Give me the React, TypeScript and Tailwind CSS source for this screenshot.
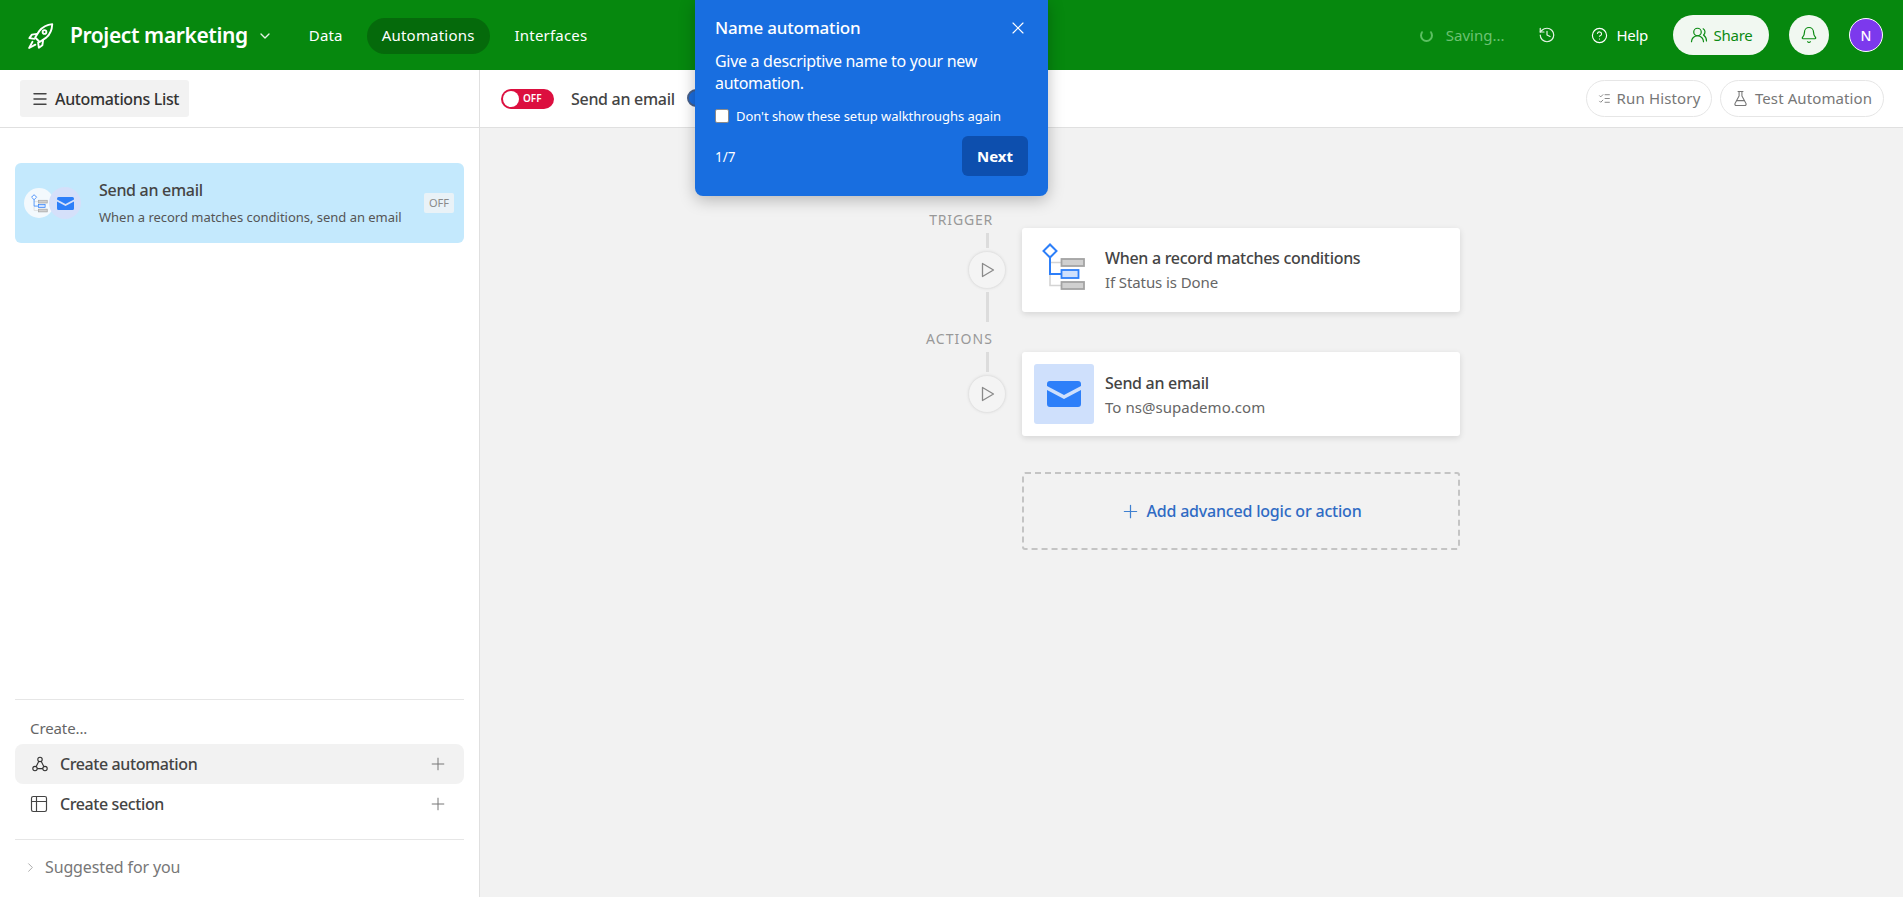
import React from 'react';
import { Bell, ChevronDown, ChevronRight, CircleHelp, FlaskConical, History, ListChecks, Menu, Plus, Table2, UsersRound, X } from 'lucide-react';

function RocketLogo() {
  return (
    <svg viewBox="0 0 24 24" className="w-[30px] h-[30px]" fill="none" stroke="#fff" strokeWidth="1.5" strokeLinejoin="round" strokeLinecap="round">
      <path d="M21 2.5c-4.2.4-7.8 2.3-10.3 5.4l-3.4 5.3 3.6 3.6 5.3-3.5c3-2.5 4.6-6.3 4.8-10.8z" />
      <circle cx="14.8" cy="8.8" r="1.5" />
      <path d="M8.9 10.3l-4.2.6-2 2.8 4 .6" />
      <path d="M13.7 15.2l-.6 4.2-2.8 2-.6-4" />
      <path d="M5.2 16.6l-2.7 5 5-2.7" />
    </svg>
  );
}

function TriggerIcon({ className }: { className?: string }) {
  return (
    <svg viewBox="0 0 44 50" className={className} fill="none">
      <path d="M8 21.5H19M8 33V44.5H19" stroke="#d4d4d4" strokeWidth="1.6" />
      <path d="M8 16V33H19" stroke="#2d7ff9" strokeWidth="2" />
      <rect x="3.4" y="5.4" width="9.2" height="9.2" transform="rotate(45 8 10)" stroke="#2d7ff9" strokeWidth="2" fill="#fff" />
      <rect x="19.5" y="18" width="22.5" height="7" fill="#d0d0d0" stroke="#a3a3a3" strokeWidth="1.8" />
      <rect x="19.5" y="29" width="17" height="8" fill="#cfe0fc" stroke="#2d7ff9" strokeWidth="1.8" />
      <rect x="19.5" y="41" width="22.5" height="7" fill="#d0d0d0" stroke="#a3a3a3" strokeWidth="1.8" />
    </svg>
  );
}

function MailIcon({ className }: { className?: string }) {
  return (
    <svg viewBox="0 0 34 26" className={className}>
      <path d="M3 0H31A3 3 0 0 1 34 3V5L17 14L0 5V3A3 3 0 0 1 3 0Z" fill="#2d7ff9" />
      <path d="M0 9L17 18L34 9V23A3 3 0 0 1 31 26H3A3 3 0 0 1 0 23Z" fill="#2d7ff9" />
    </svg>
  );
}

function PlayCircle() {
  return (
    <div className="w-[38px] h-[38px] rounded-full bg-[#f4f4f4] border border-[#e4e4e4] shadow-[0_0_3px_rgba(0,0,0,0.08)] flex items-center justify-center">
      <svg viewBox="0 0 14 16" className="w-[14px] h-[16px] ml-[2px]" fill="none">
        <path d="M1.5 1.5L12.5 8L1.5 14.5Z" stroke="#8a8a8a" strokeWidth="1.3" strokeLinejoin="round" />
      </svg>
    </div>
  );
}

function Connector({ height }: { height: string }) {
  return (
    <div className="w-[38px] flex justify-center">
      <div className={`w-[3px] bg-[#dcdcdc] ${height}`} />
    </div>
  );
}

function WorkflowIcon() {
  return (
    <svg viewBox="0 0 16 16" className="w-[16px] h-[16px]" fill="none" stroke="#333" strokeWidth="1.1">
      <circle cx="8" cy="3.4" r="2.2" />
      <circle cx="3" cy="12.6" r="2.2" />
      <circle cx="13" cy="12.6" r="2.2" />
      <path d="M6.8 5.3L4.2 10.6M9.2 5.3L11.8 10.6M5.2 12.6H10.8" />
    </svg>
  );
}

export default function App() {
  return (
    <div className="w-[1903px] h-[897px] overflow-hidden relative flex flex-col bg-white text-[#333] font-['Noto_Sans',sans-serif]">
      {/* Top bar */}
      <header className="h-[70px] shrink-0 bg-[#06880e] flex items-center text-white">
        <div className="flex items-center pl-[26px] pt-[1px]">
          <RocketLogo />
          <span className="ml-[14px] text-[21px] font-semibold tracking-[-0.4px]">Project marketing</span>
          <ChevronDown size={16} className="ml-[9px] opacity-90" />
        </div>
        <nav className="flex items-center ml-[21px] text-[15px] tracking-[0.2px] pt-[1px]">
          <span className="pl-[15px] pr-[24px]">Data</span>
          <span className="px-[15px] h-[36px] rounded-full bg-[#056a0b] flex items-center">Automations</span>
          <span className="px-[25px]">Interfaces</span>
        </nav>
        <div className="ml-auto flex items-center pr-[20px]">
          <div className="w-[13px] h-[13px] rounded-full border-[2px] border-[#5cc062] border-t-transparent" />
          <span className="ml-[13px] text-[15px] text-[#6cc272]">Saving...</span>
          <History size={18} strokeWidth={1.6} className="ml-[33px] text-[#e6f3e7]" />
          <CircleHelp size={17} strokeWidth={1.6} className="ml-[35px]" />
          <span className="ml-[9px] text-[15px] tracking-[-0.3px]">Help</span>
          <div className="ml-[25px] w-[96px] h-[40px] rounded-full bg-[#f1f8f1] text-[#0b8a12] flex items-center justify-center gap-[6px] text-[15px] tracking-[-0.3px]">
            <UsersRound size={18} strokeWidth={1.6} />
            Share
          </div>
          <div className="ml-[20px] w-[40px] h-[40px] rounded-full bg-[#f1f8f1] text-[#0b8a12] flex items-center justify-center">
            <Bell size={18} strokeWidth={1.6} />
          </div>
          <div className="ml-[20px] w-[34px] h-[34px] rounded-full bg-[#7c39ed] border border-white flex items-center justify-center text-[14px] font-medium">N</div>
        </div>
      </header>

      <div className="flex-1 flex min-h-0">
        {/* Sidebar */}
        <aside className="w-[480px] shrink-0 border-r border-[#e0e0e0] flex flex-col">
          <div className="h-[58px] shrink-0 border-b border-[#e0e0e0] pl-[20px] pt-[10px]">
            <div className="w-[169px] h-[37px] bg-[#f2f2f2] rounded-[3px] flex items-center pl-[11px] gap-[6px]">
              <Menu size={18} strokeWidth={1.9} className="text-[#444]" />
              <span className="text-[16px] font-medium tracking-[-0.35px]">Automations List</span>
            </div>
          </div>
          <div className="flex-1 px-[15px] pt-[35px]">
            <div className="h-[80px] bg-[#c4e9fd] rounded-[6px] flex items-center pl-[9px] pr-[10px]">
              <div className="flex items-center shrink-0">
                <div className="w-[30px] h-[30px] rounded-full bg-[#f3f9fd] flex items-center justify-center">
                  <TriggerIcon className="w-[17px] h-[20px]" />
                </div>
                <div className="w-[32px] h-[32px] rounded-full bg-[#d5e0fa] flex items-center justify-center -ml-[5px]">
                  <MailIcon className="w-[17px] h-[13px]" />
                </div>
              </div>
              <div className="ml-[18px] flex-1">
                <div className="text-[16px] font-medium text-[#444] tracking-[-0.3px] leading-[20px]">Send an email</div>
                <div className="mt-[8px] text-[13px] text-[#555] tracking-[-0.02px] leading-[18px]">When a record matches conditions, send an email</div>
              </div>
              <div className="w-[30px] h-[20px] bg-[#e9f2f7] rounded-[2px] text-[11px] text-[#8a8a8a] flex items-center justify-center">OFF</div>
            </div>
          </div>
          <div className="mx-[15px] border-t border-[#e6e6e6] pt-[18px] pb-[15px]">
            <div className="pl-[15px] text-[15px] text-[#666] leading-[20px] tracking-[-0.1px]">Create...</div>
            <div className="mt-[6px] h-[40px] rounded-[8px] bg-[#f2f2f2] flex items-center pl-[17px] pr-[16px]">
              <WorkflowIcon />
              <span className="ml-[12px] text-[16px] font-medium text-[#444] tracking-[-0.4px]">Create automation</span>
              <Plus size={20} strokeWidth={1.2} className="ml-auto text-[#777]" />
            </div>
            <div className="h-[40px] flex items-center pl-[14px] pr-[16px]">
              <Table2 size={20} strokeWidth={1.4} className="text-[#444]" />
              <span className="ml-[11px] text-[16px] font-medium text-[#444] tracking-[-0.4px]">Create section</span>
              <Plus size={20} strokeWidth={1.2} className="ml-auto text-[#777]" />
            </div>
          </div>
          <div className="mx-[15px] border-t border-[#e6e6e6] h-[58px] flex items-center pl-[8px] pb-[3px]">
            <ChevronRight size={15} strokeWidth={1.3} className="text-[#999]" />
            <span className="ml-[7px] text-[16px] text-[#777] tracking-[-0.13px]">Suggested for you</span>
          </div>
        </aside>

        {/* Main area */}
        <main className="flex-1 flex flex-col min-w-0 bg-[#f2f2f2]">
          <div className="h-[58px] shrink-0 bg-white border-b border-[#e0e0e0] flex items-center pl-[21px] pr-[19px]">
            <div className="w-[53px] h-[20px] rounded-full bg-[#dc0f3f] flex items-center pl-[2px]">
              <div className="w-[16px] h-[16px] rounded-full bg-white" />
              <span className="ml-[4px] text-[10px] font-semibold text-white">OFF</span>
            </div>
            <span className="ml-[17px] text-[16px] font-medium text-[#444] tracking-[-0.3px]">Send an email</span>
            <div className="ml-auto flex items-center gap-[8px] text-[15px] text-[#777]">
              <div className="w-[126px] h-[37px] rounded-full border border-[#e6e6e6] flex items-center justify-center gap-[6px]">
                <ListChecks size={13} strokeWidth={1.6} />
                <span className="tracking-[0.15px]">Run History</span>
              </div>
              <div className="w-[164px] h-[37px] rounded-full border border-[#e6e6e6] flex items-center justify-center gap-[6px]">
                <FlaskConical size={17} strokeWidth={1.5} />
                <span className="tracking-[0.1px]">Test Automation</span>
              </div>
            </div>
          </div>

          <div className="flex-1 w-[537px] mx-auto flex">
            <div className="w-[99px] shrink-0 pt-[84px] flex flex-col items-end pr-[16px]">
              <div className="h-[16px] leading-[16px] mr-[13px] text-[14px] tracking-[0.8px] text-[#999]">TRIGGER</div>
              <div className="mt-[5px]"><Connector height="h-[15px]" /></div>
              <div className="mt-[3px]"><PlayCircle /></div>
              <div className="mt-[3px]"><Connector height="h-[30px]" /></div>
              <div className="mt-[8px] h-[18px] leading-[18px] mr-[13px] text-[14px] tracking-[1.1px] text-[#999]">ACTIONS</div>
              <div className="mt-[4px]"><Connector height="h-[20px]" /></div>
              <div className="mt-[3px]"><PlayCircle /></div>
            </div>
            <div className="flex-1 pt-[100px]">
              <div className="h-[84px] bg-white rounded-[3px] shadow-[0_2px_6px_rgba(0,0,0,0.12)] flex items-center pl-[20px]">
                <TriggerIcon className="w-[44px] h-[50px] mb-[8px]" />
                <div className="ml-[19px]">
                  <div className="text-[16px] font-medium text-[#444] tracking-[-0.3px] leading-[22px]">When a record matches conditions</div>
                  <div className="mt-[2px] text-[15px] text-[#666] tracking-[-0.1px] leading-[22px]">If Status is Done</div>
                </div>
              </div>
              <div className="mt-[40px] h-[84px] bg-white rounded-[3px] shadow-[0_2px_6px_rgba(0,0,0,0.12)] flex items-center pl-[12px]">
                <div className="w-[60px] h-[60px] rounded-[3px] bg-[#cfe0fc] flex items-center justify-center">
                  <MailIcon className="w-[34px] h-[26px]" />
                </div>
                <div className="ml-[11px] pt-[1px]">
                  <div className="text-[16px] font-medium text-[#444] tracking-[-0.3px] leading-[22px]">Send an email</div>
                  <div className="mt-[2px] text-[15px] text-[#666] tracking-[0.05px] leading-[22px]">To ns@supademo.com</div>
                </div>
              </div>
              <div className="mt-[36px] h-[78px] rounded-[3px] border-2 border-dashed border-[#c4c4c4] flex items-center justify-center gap-[5px] text-[#2f6bc4]">
                <Plus size={21} strokeWidth={1.4} className="text-[#3f80d0]" />
                <span className="text-[16px] font-medium tracking-[-0.2px]">Add advanced logic or action</span>
              </div>
            </div>
          </div>
        </main>
      </div>

      {/* Walkthrough popover */}
      <div className="absolute left-[687px] top-[89px] w-[18px] h-[18px] rounded-full bg-[#1a6de0] border-2 border-[#48608a]" />
      <div className="absolute left-[695px] top-0 w-[353px] h-[196px] bg-[#186ee0] rounded-b-[8px] shadow-[0_4px_16px_rgba(0,0,0,0.25)] text-white px-[20px]">
        <div className="flex items-center justify-between pt-[15px]">
          <span className="text-[17px] font-medium tracking-[-0.2px] leading-[26px]">Name automation</span>
          <X size={20} strokeWidth={1.4} className="mr-[0px]" />
        </div>
        <p className="mt-[9px] text-[16px] leading-[22px] tracking-[-0.3px]">Give a descriptive name to your new automation.</p>
        <label className="mt-[12px] flex items-center gap-[7px]">
          <span className="w-[14px] h-[14px] bg-white rounded-[2px] border border-[#8a8a8a]" />
          <span className="text-[13px] tracking-[-0.06px] leading-[20px]">Don't show these setup walkthroughs again</span>
        </label>
        <div className="mt-[10px] flex items-center justify-between">
          <span className="text-[13.5px] pt-[2px]">1/7</span>
          <button className="w-[66px] h-[40px] rounded-[6px] bg-[#0d4fae] text-[15px] font-bold">Next</button>
        </div>
      </div>
    </div>
  );
}
